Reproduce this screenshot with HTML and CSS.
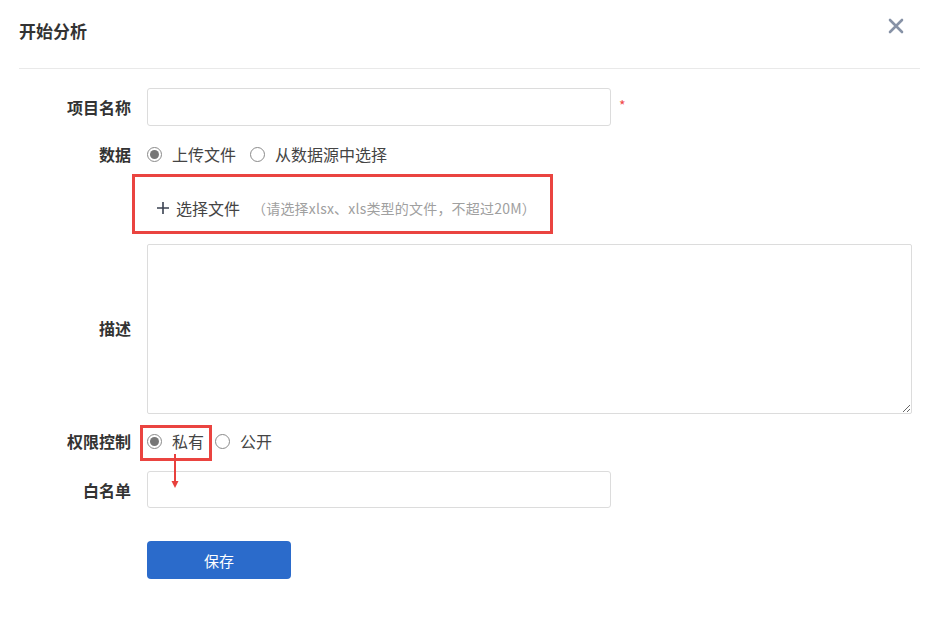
FILE: index.html
```html
<!DOCTYPE html>
<html lang="zh-CN">
<head>
<meta charset="utf-8">
<title>开始分析</title>
<link rel="stylesheet" href="styles.css">
</head>
<body>
<div class="dialog">
  <header class="dlg-head">
    <h2 class="dlg-title">开始分析</h2>
    <button class="dlg-close" type="button" aria-label="关闭">
      <svg width="16" height="16" viewBox="0 0 16 16"><path d="M2 2 L14 14 M14 2 L2 14" stroke="#8792a6" stroke-width="2.6" stroke-linecap="round" fill="none"/></svg>
    </button>
  </header>
  <form class="form">
    <div class="row row-name">
      <label class="lab">项目名称</label>
      <input class="text text-name" type="text">
      <span class="req">*</span>
    </div>
    <div class="row row-data">
      <label class="lab">数据</label>
      <div class="radios">
        <span class="radio"><span class="dot on"></span><span class="rtxt">上传文件</span></span>
        <span class="radio"><span class="dot"></span><span class="rtxt">从数据源中选择</span></span>
      </div>
    </div>
    <div class="row row-upload">
      <span class="lab"></span>
      <div class="upload">
        <span class="plus">
          <svg width="12" height="12" viewBox="0 0 12 12"><path d="M6 0 V12 M0 6 H12" stroke="#3a4150" stroke-width="1.6" fill="none"/></svg>
        </span>
        <span class="up-txt">选择文件</span>
        <span class="hint">（请选择xlsx、xls类型的文件，不超过20M）</span>
      </div>
    </div>
    <div class="row row-desc">
      <label class="lab">描述</label>
      <textarea class="area"></textarea>
    </div>
    <div class="row row-perm">
      <label class="lab">权限控制</label>
      <div class="radios">
        <span class="mark">
          <span class="radio"><span class="dot on"></span><span class="rtxt">私有</span></span>
          <svg class="arrow" width="10" height="36" viewBox="0 0 10 36"><path d="M5 0 V31" stroke="#e8403d" stroke-width="2" fill="none"/><path d="M1.5 27 L5 34 L8.5 27 Z" fill="#e8403d"/></svg>
        </span>
        <span class="radio radio-pub"><span class="dot"></span><span class="rtxt">公开</span></span>
      </div>
    </div>
    <div class="row row-white">
      <label class="lab">白名单</label>
      <input class="text text-white" type="text">
    </div>
    <div class="row row-save">
      <span class="lab"></span>
      <button class="btn-save" type="button">保存</button>
    </div>
  </form>
</div>
</body>
</html>
```
FILE: styles.css
```css
* { box-sizing: border-box; }
html, body { margin: 0; padding: 0; background: #fff; }
body {
  font-family: "Noto Sans CJK SC", "Noto Sans", "Liberation Sans", sans-serif;
  color: #333;
}
.dialog { padding: 0 19px; width: 939px; }
.dlg-head {
  height: 69px;
  border-bottom: 1px solid #e9e9e9;
  display: flex;
  align-items: flex-start;
  justify-content: space-between;
}
.dlg-title {
  margin: 0;
  padding-top: 19px;
  font-size: 17px;
  line-height: 24px;
  font-weight: 700;
  color: #333;
}
.dlg-close {
  margin: 18px 16px 0 0;
  padding: 0;
  border: 0;
  background: none;
  width: 16px;
  height: 16px;
  display: flex;
}
.form { padding-top: 19px; }
.row { display: flex; align-items: center; gap: 15px; }
.lab {
  width: 112px;
  flex: none;
  text-align: right;
  font-size: 16px;
  font-weight: 700;
  color: #333;
  line-height: 22px;
}
.row .lab { margin-right: 1px; }
.text {
  height: 38px;
  border: 1px solid #dcdcdc;
  border-radius: 3px;
  font-size: 15px;
  padding: 0 10px;
  outline: none;
}
.text-name { width: 464px; }
.req {
  color: #f04848;
  font-size: 14px;
  margin-left: -7px;
  align-self: flex-start;
  margin-top: 7px;
}
.row-data { margin-top: 16px; height: 24px; }
.radios { display: flex; align-items: center; }
.radio { display: inline-flex; align-items: center; }
.dot {
  width: 15px;
  height: 15px;
  border: 1px solid #8a8a8a;
  border-radius: 50%;
  display: inline-flex;
  align-items: center;
  justify-content: center;
}
.dot.on::after {
  content: "";
  width: 9px;
  height: 9px;
  border-radius: 50%;
  background: #777;
}
.rtxt {
  margin-left: 10px;
  font-size: 16px;
  line-height: 22px;
  color: #444;
}
.row-data .radio + .radio { margin-left: 14px; }
.row-upload { margin-top: 8px; }
.upload {
  margin-left: -15px;
  width: 421px;
  height: 60px;
  border: 3px solid #ea4440;
  display: flex;
  align-items: center;
  padding: 8px 0 0 22px;
}
.plus { display: inline-flex; width: 12px; height: 12px; }
.up-txt { margin-left: 7px; font-size: 16px; color: #444; line-height: 22px; }
.hint { margin-left: 12px; font-size: 14px; letter-spacing: 0.2px; color: #a0a0a0; line-height: 20px; }
.row-desc { margin-top: 10px; }
.row-desc .lab { position: relative; top: -1px; }
.area {
  width: 765px;
  height: 170px;
  border: 1px solid #dcdcdc;
  border-radius: 2px;
  resize: both;
  font-size: 15px;
  outline: none;
}
.row-perm { margin-top: 11px; }
.row-perm .lab { position: relative; top: -2px; }
.mark {
  position: relative;
  margin-left: -7px;
  height: 36px;
  border: 3px solid #ea4440;
  padding: 0 5px 0 4px;
  display: inline-flex;
  align-items: center;
}
.mark .radio, .radio-pub { position: relative; top: -2px; }
.arrow { position: absolute; left: 27px; top: 26px; }
.radio-pub { margin-left: 3px; }
.row-white { margin-top: 10px; }
.text-white { width: 464px; height: 37px; }
.row-save { margin-top: 33px; }
.btn-save {
  width: 144px;
  height: 38px;
  border: 0;
  border-radius: 4px;
  background: #2b6bcb;
  color: #fff;
  font-family: inherit;
  font-size: 15px;
}
```
